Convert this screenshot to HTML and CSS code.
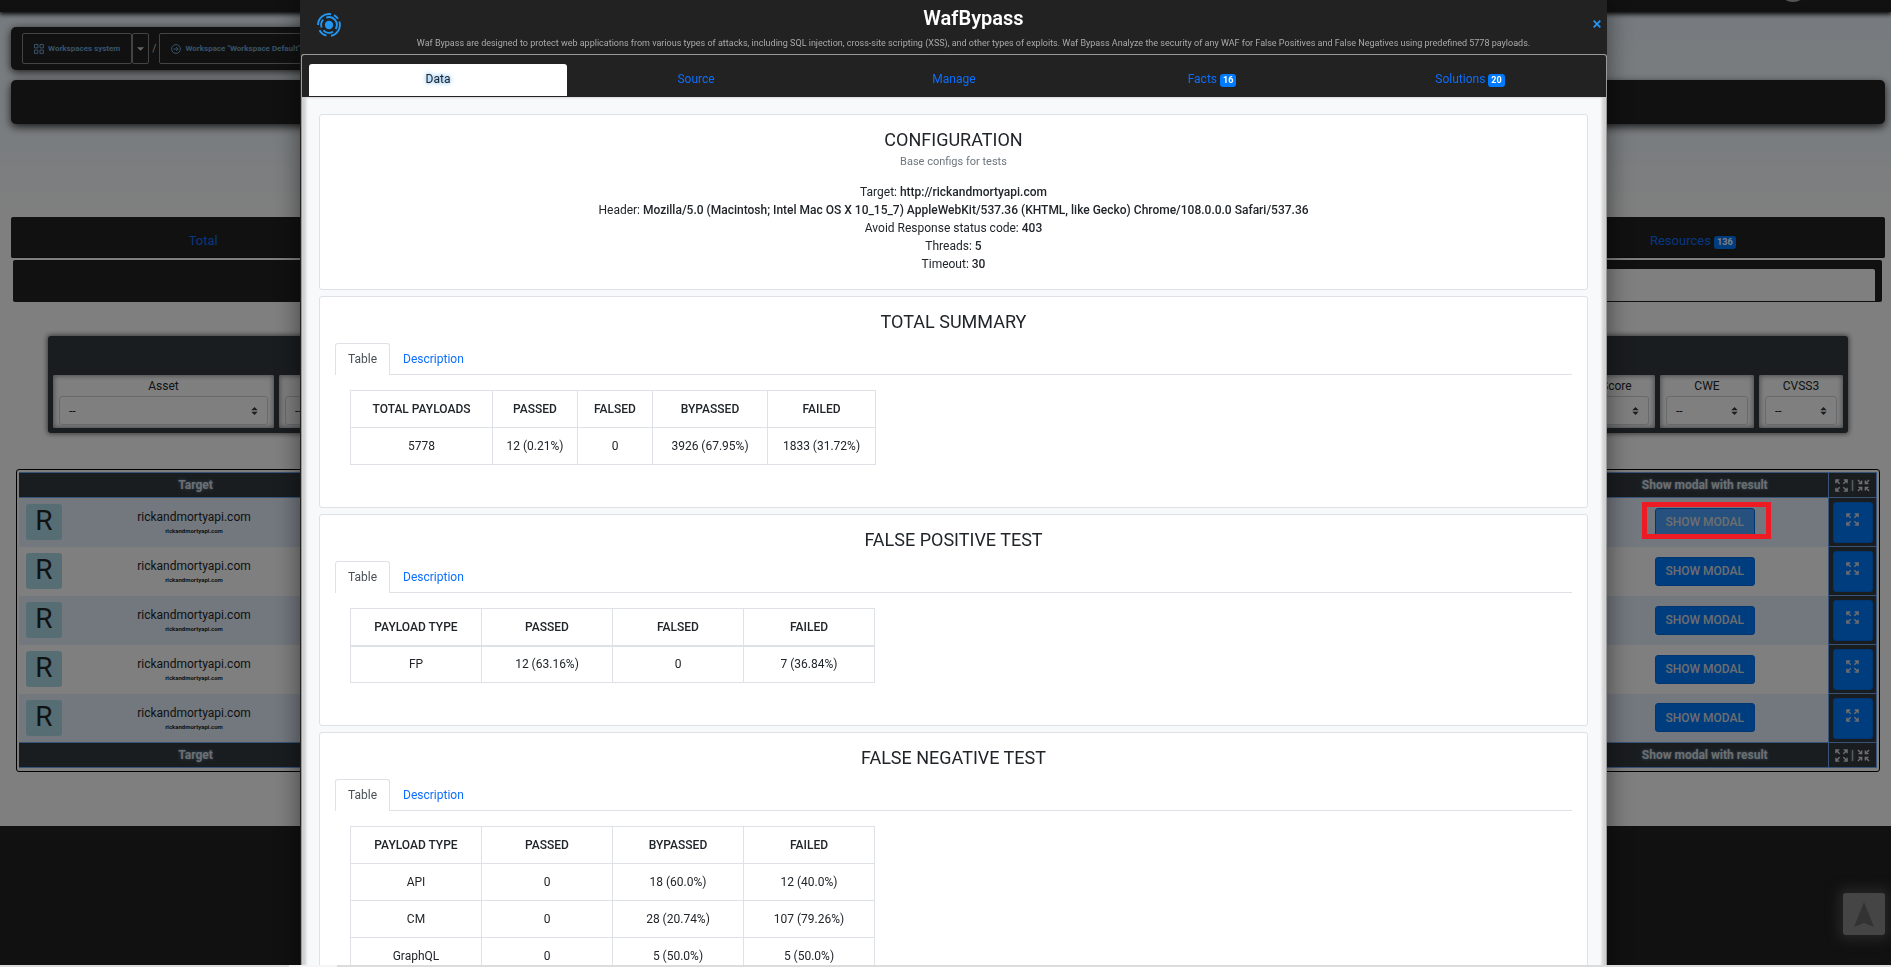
FILE: index.html
```html
<!DOCTYPE html>
<html lang="en">
<head>
<meta charset="utf-8">
<title>WafBypass</title>
<link rel="stylesheet" href="styles.css">
</head>
<body>
<svg class="sprite" aria-hidden="true">
  <symbol id="expand" viewBox="0 0 14 14"><path d="M5 5 1.5 1.5M1 4.6V1h3.6M9 5l3.5-3.5M9.4 1H13v3.6M5 9l-3.5 3.5M1 9.4V13h3.6M9 9l3.5 3.5M13 9.4V13H9.4" fill="none" stroke="currentColor" stroke-width="1.5"/></symbol>
  <symbol id="collapse" viewBox="0 0 14 14"><path d="M1 1l3.8 3.8M5 1.6V5H1.6M13 1 9.2 4.8M9 1.6V5h3.4M1 13l3.8-3.8M1.6 9H5v3.4M13 13 9.2 9.2M9 12.4V9h3.4" fill="none" stroke="currentColor" stroke-width="1.5"/></symbol>
</svg>

<div class="page">
  <header class="topbar"><span class="user-dot"></span></header>
  <main class="content">
    <nav class="crumbs" aria-label="Workspaces">
      <div class="btn-group">
        <button class="crumb" type="button"><svg viewBox="0 0 10 10" width="10" height="10"><path d="M.5.5h3.4v3.4H.5zM6 .5h3.4v3.4H6zM.5 6h3.4v3.4H.5zM6 6h3.4v3.4H6z" fill="none" stroke="currentColor"/></svg>Workspaces system</button>
        <button class="crumb caret" type="button" aria-label="Open list"><svg viewBox="0 0 8 4" width="7" height="4"><path d="M0 0h8L4 4z" fill="currentColor"/></svg></button>
      </div>
      <span class="slash">/</span>
      <button class="crumb" type="button"><svg viewBox="0 0 10 10" width="10" height="10"><circle cx="5" cy="5" r="4.4" fill="none" stroke="currentColor"/><path d="M2.5 5h4.6M5.2 3l2 2-2 2" fill="none" stroke="currentColor"/></svg>Workspace "Workspace Default"</button>
    </nav>
    <div class="title-bar"></div>
    <nav class="main-tabs" aria-label="Sections">
      <a href="#total">Total</a><span></span><span></span><span></span><a href="#resources">Resources <b class="badge">136</b></a>
    </nav>
    <div class="sub-tabs"><div class="sub-active"></div></div>

    <section class="filters">
      <div class="filter-row">
        <label class="filter asset">Asset<select><option>--</option></select></label>
        <label class="filter wide">&nbsp;<select><option>--</option></select></label>
        <label class="filter score">CVSS Score<select><option>--</option></select></label>
        <label class="filter cwe">CWE<select><option>--</option></select></label>
        <label class="filter cvss">CVSS3<select><option>--</option></select></label>
      </div>
    </section>

    <div class="grid-frame">
      <table class="grid">
        <colgroup><col class="c-target"><col><col class="c-show"><col class="c-exp"></colgroup>
        <thead><tr><th>Target</th><th></th><th>Show modal with result</th><th><span class="pair"><svg><use href="#expand"/></svg>|<svg><use href="#collapse"/></svg></span></th></tr></thead>
        <tbody>
          <tr><td><div class="target"><span class="avatar">R</span><span class="host">rickandmortyapi.com<small>rickandmortyapi.com</small></span></div></td><td></td><td><button class="show on" type="button">SHOW MODAL</button></td><td class="x"><button class="exp" type="button" aria-label="Expand"><svg><use href="#expand"/></svg></button></td></tr>
          <tr><td><div class="target"><span class="avatar">R</span><span class="host">rickandmortyapi.com<small>rickandmortyapi.com</small></span></div></td><td></td><td><button class="show" type="button">SHOW MODAL</button></td><td class="x"><button class="exp" type="button" aria-label="Expand"><svg><use href="#expand"/></svg></button></td></tr>
          <tr><td><div class="target"><span class="avatar">R</span><span class="host">rickandmortyapi.com<small>rickandmortyapi.com</small></span></div></td><td></td><td><button class="show" type="button">SHOW MODAL</button></td><td class="x"><button class="exp" type="button" aria-label="Expand"><svg><use href="#expand"/></svg></button></td></tr>
          <tr><td><div class="target"><span class="avatar">R</span><span class="host">rickandmortyapi.com<small>rickandmortyapi.com</small></span></div></td><td></td><td><button class="show" type="button">SHOW MODAL</button></td><td class="x"><button class="exp" type="button" aria-label="Expand"><svg><use href="#expand"/></svg></button></td></tr>
          <tr><td><div class="target"><span class="avatar">R</span><span class="host">rickandmortyapi.com<small>rickandmortyapi.com</small></span></div></td><td></td><td><button class="show" type="button">SHOW MODAL</button></td><td class="x"><button class="exp" type="button" aria-label="Expand"><svg><use href="#expand"/></svg></button></td></tr>
        </tbody>
        <tfoot><tr><th>Target</th><th></th><th>Show modal with result</th><th><span class="pair"><svg><use href="#expand"/></svg>|<svg><use href="#collapse"/></svg></span></th></tr></tfoot>
      </table>
    </div>
  </main>
  <footer class="footer"></footer>
  <button class="to-top" type="button" aria-label="To top"><svg viewBox="0 0 20 25" width="20" height="25"><path d="M10 0l10 25-10-4-10 4z" fill="currentColor"/></svg></button>
</div>

<div class="overlay">
  <div class="modal" role="dialog" aria-label="WafBypass">
    <div class="modal-head">
      <svg class="logo" viewBox="0 0 24 24" width="24" height="24" fill="none" stroke="#2196f3" stroke-width="1.9"><circle cx="12" cy="12" r="4.2" fill="#2196f3" stroke="none"/><path d="M1 12A11 11 0 0 1 14 1.2M17 2.2a11 11 0 0 1 4 3.6M22.3 8.5A11 11 0 0 1 14 22.8M9.5 22.7a11 11 0 0 1-7-5.4"/><path d="M4.6 14.5A7.8 7.8 0 0 1 6.2 6.7M9.2 4.7A7.8 7.8 0 0 1 18.7 16M16 18.8a7.8 7.8 0 0 1-9.6-1.4"/></svg>
      <div class="modal-title"><h1>WafBypass</h1><p>Waf Bypass are designed to protect web applications from various types of attacks, including SQL injection, cross-site scripting (XSS), and other types of exploits. Waf Bypass Analyze the security of any WAF for False Positives and False Negatives using predefined 5778 payloads.</p></div>
      <button class="close" type="button" aria-label="Close"><svg viewBox="0 0 8 8" width="8" height="8"><path d="M.7.7l6.6 6.6M7.3.7.7 7.3" stroke="currentColor" stroke-width="1.8"/></svg></button>
    </div>
    <div class="modal-body">
      <nav class="modal-tabs" aria-label="Result"><a class="active" href="#data">Data</a><a href="#source">Source</a><a href="#manage">Manage</a><a href="#facts">Facts <b class="badge">16</b></a><a href="#solutions">Solutions <b class="badge">20</b></a></nav>
      <div class="cards">
        <section class="card">
          <h2>CONFIGURATION</h2>
          <p class="sub">Base configs for tests</p>
          <div class="config">
            <div>Target: <b>http://rickandmortyapi.com</b></div>
            <div>Header: <b>Mozilla/5.0 (Macintosh; Intel Mac OS X 10_15_7) AppleWebKit/537.36 (KHTML, like Gecko) Chrome/108.0.0.0 Safari/537.36</b></div>
            <div>Avoid Response status code: <b>403</b></div>
            <div>Threads: <b>5</b></div>
            <div>Timeout: <b>30</b></div>
          </div>
        </section>
        <section class="card">
          <h2>TOTAL SUMMARY</h2>
          <nav class="tabs"><a class="active" href="#t1">Table</a><a href="#d1">Description</a></nav>
          <table class="data total">
            <colgroup><col class="w1"><col class="w2"><col class="w3"><col class="w4"><col class="w5"></colgroup>
            <thead><tr><th>TOTAL PAYLOADS</th><th>PASSED</th><th>FALSED</th><th>BYPASSED</th><th>FAILED</th></tr></thead>
            <tbody><tr><td>5778</td><td>12 (0.21%)</td><td>0</td><td>3926 (67.95%)</td><td>1833 (31.72%)</td></tr></tbody>
          </table>
        </section>
        <section class="card">
          <h2>FALSE POSITIVE TEST</h2>
          <nav class="tabs"><a class="active" href="#t2">Table</a><a href="#d2">Description</a></nav>
          <table class="data thick">
            <thead><tr><th>PAYLOAD TYPE</th><th>PASSED</th><th>FALSED</th><th>FAILED</th></tr></thead>
            <tbody><tr><td>FP</td><td>12 (63.16%)</td><td>0</td><td>7 (36.84%)</td></tr></tbody>
          </table>
        </section>
        <section class="card">
          <h2>FALSE NEGATIVE TEST</h2>
          <nav class="tabs"><a class="active" href="#t3">Table</a><a href="#d3">Description</a></nav>
          <table class="data">
            <thead><tr><th>PAYLOAD TYPE</th><th>PASSED</th><th>BYPASSED</th><th>FAILED</th></tr></thead>
            <tbody>
              <tr><td>API</td><td>0</td><td>18 (60.0%)</td><td>12 (40.0%)</td></tr>
              <tr><td>CM</td><td>0</td><td>28 (20.74%)</td><td>107 (79.26%)</td></tr>
              <tr><td>GraphQL</td><td>0</td><td>5 (50.0%)</td><td>5 (50.0%)</td></tr>
            </tbody>
          </table>
        </section>
      </div>
    </div>
  </div>
</div>
<div class="marker"></div>
<div class="scroll-strip"></div>
</body>
</html>
```
FILE: styles.css
```css
* { box-sizing: border-box; }
html, body { height: 100%; margin: 0; overflow: hidden; }
body { font: 12px/18px Roboto, "Liberation Sans", sans-serif; color: #212529; }
button, select { font: inherit; color: inherit; margin: 0; }
button { cursor: pointer; }
a { color: #0d6efd; text-decoration: none; }
h1, h2, p { margin: 0; font-weight: 400; }
table { border-collapse: collapse; table-layout: fixed; }
.sprite { display: none; }

/* Page behind the dialog */
.page { min-height: 100vh; display: flex; flex-direction: column; background: linear-gradient(#ecf6fe, #f5fbfe 150px, #fff 215px); }
.topbar { height: 12px; flex: none; background: #222; box-shadow: 0 1px 5px 1px #000; display: flex; justify-content: flex-end; padding-right: 83px; overflow: visible; }
.user-dot { width: 30px; height: 30px; margin-top: -28px; border-radius: 50%; background: #aaa; }
.content { flex: none; height: 814px; padding: 15px 6px 0 11px; box-shadow: 0 1px 4px #333; }
.crumbs { display: flex; align-items: center; gap: 3px; width: 50%; height: 43px; padding: 0 11px; margin-bottom: 10px; background: #222; border-radius: 5px; box-shadow: 0 2px 8px #333; }
.btn-group { display: flex; }
.crumb { display: flex; align-items: center; gap: 4px; height: 31px; padding: 0 11px; border: 1px solid #888; border-radius: 2px; background: none; color: #6ea5d2; font-size: 8px; font-weight: 700; white-space: nowrap; }
.caret { padding: 0 4px; color: #ccc; }
.slash { color: #ccc; font-size: 10px; }
.title-bar { height: 44px; margin-bottom: 93px; background: #222; border-radius: 5px; box-shadow: 0 3px 9px #333; }
.main-tabs { display: grid; grid-template-columns: repeat(5, 1fr); height: 41px; padding: 7px 6px 0; background: #222; border-radius: 2px; align-items: center; text-align: center; border-bottom: 1px solid #181818; }
.main-tabs a { font-size: 13px; }
.badge { display: inline-block; padding: 0 3px; border-radius: 3px; background: #007bff; color: #fff; font-size: 9px; line-height: 13px; font-weight: 700; }
.sub-tabs { height: 42px; margin: 2px 3px 34px 2px; padding: 9px 7px 1px; background: #222; border-radius: 2px; }
.sub-active { height: 100%; width: 50%; margin-left: auto; background: #fff; border-radius: 2px 2px 0 0; }
.filters { margin: 0 37px 36px; height: 97px; padding: 39px 5px 5px; background: #343a40; border-radius: 3px; box-shadow: 0 0 5px 1px #777; }
.filter-row { display: flex; gap: 5px; height: 53px; }
.filter { display: flex; flex-direction: column; align-items: center; padding: 2px 6px 3px; background: #fff; border-radius: 2px; box-shadow: inset 0 0 5px 1px #999; }
.asset { width: 221px; }
.wide { flex: 1; }
.score { width: 110px; }
.cwe { width: 94px; }
.cvss { width: 84px; }
.filter select { appearance: none; width: 100%; height: 29px; margin-top: 1px; padding: 0 9px; border: 1px solid #ced4da; border-radius: 3px; font-size: 12px; background: #fff url("data:image/svg+xml,%3Csvg xmlns='http://www.w3.org/2000/svg' viewBox='0 0 4 5'%3E%3Cpath fill='%23343a40' d='M2 0L0 2h4zm0 5L0 3h4z'/%3E%3C/svg%3E") no-repeat right 9px center / 7px 8px; }
.grid-frame { margin: 0 5px; padding: 2px 2px 3px; border: 1px solid #000; border-radius: 3px; }
.grid { width: 100%; text-align: center; }
.c-target { width: 353px; }
.c-show { width: 247px; }
.c-exp { width: 48px; }
.grid th { height: 25px; padding: 0; background: #343a40; color: #ddd; border: 1px solid #6ea8f0; border-width: 1px 0; text-shadow: 0 0 3px #6ea5d2; }
.grid th:last-child { border-width: 1px; }
.grid td { height: 49px; padding: 0; }
.grid tbody tr { background: #fff; }
.grid tbody tr:nth-child(odd) { background: #e6effc; }
.grid td.x { background: #343a40; border: 1px solid #6ea8f0; }
.target { display: flex; align-items: center; padding: 0 46px 0 7px; }
.avatar { width: 36px; height: 36px; border-radius: 3px; background: #addbe6; font-size: 28px; line-height: 34px; }
.host { flex: 1; }
.host small { display: block; font-size: 6px; line-height: 10px; font-weight: 700; }
.show { width: 100px; height: 29px; border: 1px solid #006ee6; border-radius: 3px; background: #007bff; font-weight: 500; color: #ddd; }
.show.on { background: #4ca2ff; }
.exp { display: block; width: 40px; height: 41px; margin: 0 auto; padding: 0; border: 1px solid #006ee6; border-radius: 3px; background: #007bff; color: #ddd; }
.exp svg { width: 13px; height: 13px; }
.pair { display: flex; justify-content: center; align-items: center; gap: 3px; font-weight: 400; }
.pair svg { width: 13px; height: 13px; flex: none; }
.footer { flex: 1; background: #222; }
.to-top { position: absolute; right: 6px; bottom: 32px; width: 42px; height: 42px; padding: 0; border: 0; border-radius: 3px; background: #8a8a8a; color: #666; box-shadow: 0 0 12px 5px #4a4a4a; display: grid; place-items: center; }

/* Dialog */
.overlay { position: fixed; inset: 0; padding: 0 284px 0 300px; background: rgba(0, 0, 0, .5); overflow: hidden; }
.modal { min-height: 100%; background: #222; box-shadow: 0 0 24px rgba(0, 0, 0, .5); }
.modal-head { display: grid; grid-template-columns: 40px 1fr 14px; height: 54px; padding: 0 3px 0 17px; }
.logo { margin-top: 13px; }
.modal-title { text-align: center; }
.modal-title h1 { font-size: 20px; line-height: 22px; padding-top: 7px; color: #fff; font-weight: 600; }
.modal-title p { padding-top: 6px; font-size: 9px; line-height: 16px; color: #aaa; font-weight: 400; white-space: nowrap; }
.close { align-self: start; margin-top: 15px; padding: 0; border: 0; background: none; color: #2196f3; line-height: 18px; }
.modal-body { margin-left: 1px; border: 1px solid #999; border-bottom: 0; border-radius: 3px 3px 0 0; min-height: calc(100vh - 54px); background: #f8f9fb; overflow: hidden; }
.modal-tabs { display: grid; grid-template-columns: repeat(5, 1fr); padding: 9px 7px 1px; background: #222; text-align: center; }
.modal-tabs a { height: 32px; line-height: 31px; }
.modal-tabs .active { background: #fff; color: #212529; border-radius: 3px 3px 0 0; text-shadow: 0 0 4px #2196f3; }
.cards { padding: 17px 18px 0 17px; display: grid; gap: 6px; box-shadow: inset 4px 0 3px #d0d0d0, inset -4px 0 3px #d0d0d0; }
.card { padding: 13px 15px 42px; border: 1px solid #dee2e6; border-radius: 3px; background: #fff; }
.card h2 { font-size: 18px; line-height: 24px; text-align: center; }
.sub { color: #6c757d; text-align: center; font-size: 11px; line-height: 20px; }
.config { padding-top: 11px; text-align: center; margin-bottom: -26px; }
.config b { font-weight: 500; }
.tabs { display: flex; margin: 9px 0 15px; border-bottom: 1px solid #dee2e6; height: 32px; }
.tabs a { height: 32px; padding: 0 12px; line-height: 30px; border: 1px solid transparent; border-bottom: 0; }
.tabs .active { color: #495057; border-color: #dee2e6; border-radius: 3px 3px 0 0; background: #fff; }
.data { width: 525px; margin-left: 15px; text-align: center; }
.data th, .data td { height: 37px; padding: 0; border: 1px solid #dee2e6; }
.data th { font-weight: 500; }
.thick th { border-bottom-width: 2px; }
.w1 { width: 142px; }
.w2 { width: 85px; }
.w3 { width: 75px; }
.w4 { width: 115px; }
.w5 { width: 108px; }

/* Highlight round the first row's button, and the window's bottom edge */
.marker { position: fixed; right: 120px; top: 502px; width: 129px; height: 37px; border: 5px solid #ed1c24; }
.scroll-strip { position: fixed; left: 0; right: 0; bottom: 0; height: 2px; background: linear-gradient(90deg, #dcdcdc 289px, #f5f5f5 289px, #f5f5f5 337px, #dcdcdc 337px); }
```
